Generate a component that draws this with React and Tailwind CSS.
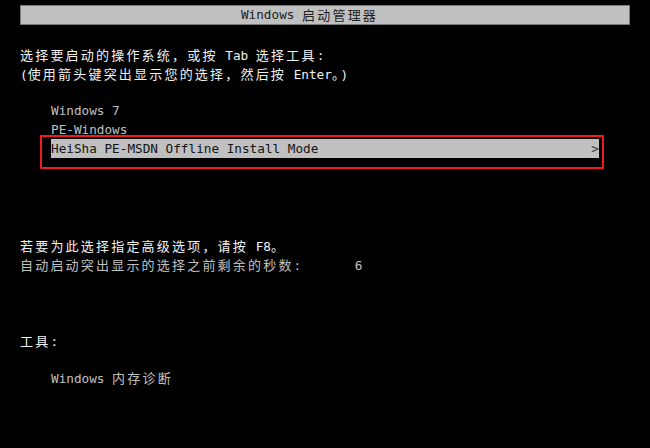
const CJK = /([\u3000-\u303f\u3400-\u9fff\uff00-\uffef]+)/;

// Mono cells for Latin, double-width cells for CJK, like the boot console.
function Txt({ s }) {
  return s.split(CJK).map((part, i) =>
    CJK.test(part) ? (
      <span key={i} className="font-['Noto_Sans_CJK_SC',sans-serif] text-[13px] tracking-[2.2px]">
        {part}
      </span>
    ) : (
      <span key={i}>{part}</span>
    )
  );
}

function Line({ s, className = '' }) {
  return (
    <div className={`h-[19px] leading-[19px] whitespace-pre ${className}`}>
      <Txt s={s} />
    </div>
  );
}

export default function App() {
  return (
    <div className="w-[650px] h-[448px] bg-black overflow-hidden font-['DejaVu_Sans_Mono','Noto_Sans_CJK_SC',monospace] text-[12.7px]">
      <div className="mt-[5px] mx-[20px] h-[20px] bg-[#c0c0c0] border border-[#7a7a7a] flex items-center justify-center pr-[31px] text-[#202020] leading-[18px] whitespace-pre">
        <Txt s="Windows 启动管理器" />
      </div>

      <div className="mt-[20px] pl-[20px] text-[#f2f2f2]">
        <Line s="选择要启动的操作系统，或按 Tab 选择工具:" />
        <Line s="(使用箭头键突出显示您的选择，然后按 Enter。)" />
      </div>

      <div className="mt-[18px] pl-[51px] w-[599px] text-[#c0c0c0]">
        <Line s="Windows 7" />
        <Line s="PE-Windows" />
        <div className="relative h-[19px] leading-[19px] bg-[#c0c0c0] text-[#141414] flex justify-between whitespace-pre">
          <span>HeiSha PE-MSDN Offline Install Mode</span>
          <span className="text-[#3a3a3a]">&gt;</span>
          <span className="absolute -left-[11px] -top-[4px] -right-[5px] -bottom-[11px] border-2 border-[#ee1c1c] rounded-[1px]" />
        </div>
      </div>

      <div className="mt-[78px] pl-[20px]">
        <Line s="若要为此选择指定高级选项，请按 F8。" className="text-[#f2f2f2]" />
        <Line s="自动启动突出显示的选择之前剩余的秒数:       6" className="text-[#c0c0c0]" />
      </div>

      <div className="mt-[57px] pl-[20px] text-[#f2f2f2]">
        <Line s="工具:" />
      </div>

      <div className="mt-[18px] pl-[51px] text-[#c0c0c0]">
        <Line s="Windows 内存诊断" />
      </div>
    </div>
  );
}
